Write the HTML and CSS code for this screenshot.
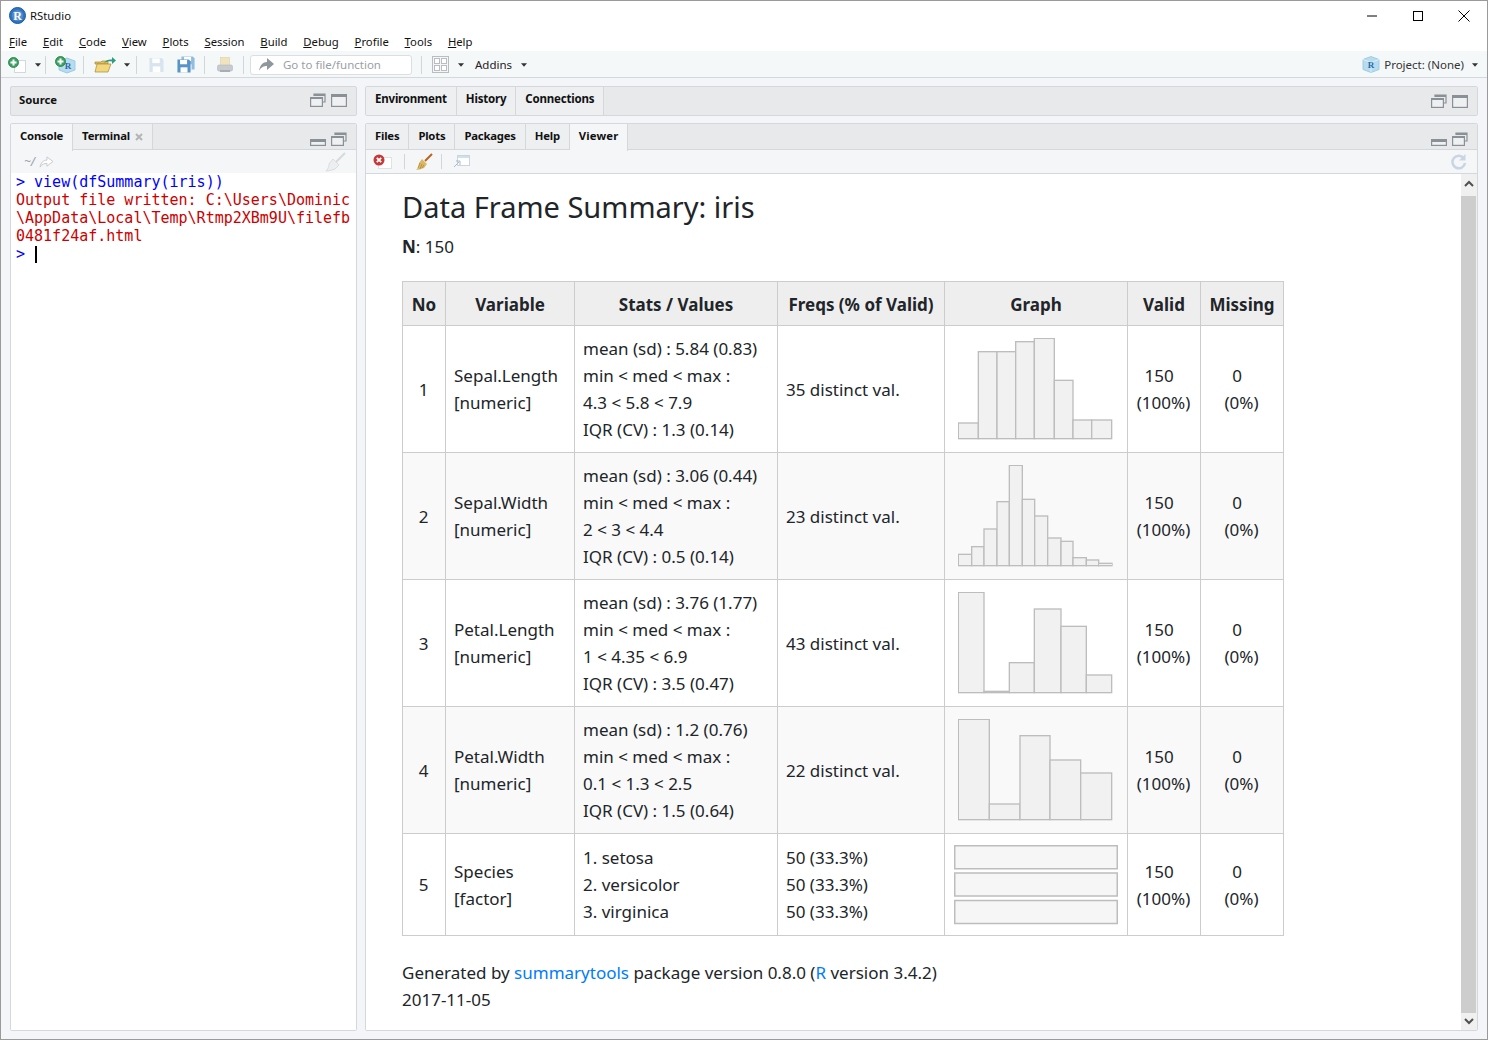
FILE: index.html
```html
<!DOCTYPE html>
<html lang="en">
<head>
<meta charset="utf-8">
<title>RStudio</title>
<link rel="stylesheet" href="styles.css">
</head>
<body>
<svg class="defs" width="0" height="0" aria-hidden="true">
  <symbol id="caret" viewBox="0 0 7 4"><path d="M0 0h7L3.500 4z" fill="#333"/></symbol>
  <symbol id="win-stack" viewBox="0 0 16 14"><path d="M4 3V1h11v8h-2" fill="none" stroke="#8a9196" stroke-width="1.200"/><rect x="4" y="1" width="11" height="2" fill="#8a9196"/><rect x=".6" y="4.600" width="11.800" height="8.800" fill="#eef0f2" stroke="#8a9196" stroke-width="1.200"/><rect x="1" y="4" width="11" height="2" fill="#8a9196"/></symbol>
  <symbol id="win-max" viewBox="0 0 16 14"><rect x=".6" y="1.600" width="14.800" height="11.800" fill="#eef0f2" stroke="#8a9196" stroke-width="1.200"/><rect x="1" y="1" width="14" height="3" fill="#8a9196"/></symbol>
  <symbol id="win-min" viewBox="0 0 16 8"><rect x=".6" y="1.600" width="14.800" height="5.800" fill="#eef0f2" stroke="#8a9196" stroke-width="1.200"/><rect x="1" y="1" width="14" height="3" fill="#8a9196"/></symbol>
  <symbol id="plus-doc" viewBox="0 0 19 16"><rect x="6.500" y="3.500" width="11" height="12" fill="#fff" stroke="#d5d8da"/><circle cx="5.500" cy="5.500" r="5" fill="#3ba361" stroke="#1d7a40" stroke-width=".8"/><path d="M5.500 2.500v6M2.500 5.500h6" stroke="#fff" stroke-width="2"/></symbol>
  <symbol id="disk" viewBox="0 0 16 16"><path d="M.5.500h13l2 2v13H.5z" fill="currentColor"/><rect x="3.500" y="1" width="8" height="5" fill="#fff"/><rect x="4" y="9.500" width="8" height="6" fill="#fff"/></symbol>
</svg>

<div class="app">
  <header class="titlebar">
    <div class="app-id">
      <svg class="logo" width="17" height="17" viewBox="0 0 17 17"><circle cx="8.500" cy="8.500" r="8" fill="#2f74c0" stroke="#1c5ba2"/><circle cx="8.500" cy="8.500" r="5.500" fill="#fff" opacity=".18"/><text x="8.500" y="12.500" class="logo-r">R</text></svg>
      <span>RStudio</span>
    </div>
    <div class="winctl">
      <svg width="16" height="16" viewBox="0 0 16 16"><path d="M3 8h10" stroke="#000"/></svg>
      <svg width="16" height="16" viewBox="0 0 16 16"><rect x="3.500" y="3.500" width="9" height="9" fill="none" stroke="#000"/></svg>
      <svg width="16" height="16" viewBox="0 0 16 16"><path d="M2.500 2.500l11 11M13.500 2.500l-11 11" stroke="#000"/></svg>
    </div>
  </header>

  <nav class="menubar">
    <span><u>F</u>ile</span><span><u>E</u>dit</span><span><u>C</u>ode</span><span><u>V</u>iew</span><span><u>P</u>lots</span><span><u>S</u>ession</span><span><u>B</u>uild</span><span><u>D</u>ebug</span><span><u>P</u>rofile</span><span><u>T</u>ools</span><span><u>H</u>elp</span>
  </nav>

  <div class="toolbar">
    <svg class="i-new" width="19" height="16"><use href="#plus-doc"/></svg>
    <svg class="caret c1" width="6" height="4"><use href="#caret"/></svg>
    <i class="sep s1"></i>
    <svg class="i-proj" width="21" height="18" viewBox="0 0 21 18"><path d="M12 2l8 3v9l-8 3-8-3V5z" fill="#b8dcef" stroke="#8fc4e0" stroke-width=".8"/><text x="13" y="13" class="cube-r">R</text><circle cx="5.500" cy="5.500" r="5" fill="#3ba361" stroke="#1d7a40" stroke-width=".8"/><path d="M5.500 2.500v6M2.500 5.500h6" stroke="#fff" stroke-width="2"/></svg>
    <i class="sep s2"></i>
    <svg class="i-open" width="22" height="16" viewBox="0 0 22 16"><path d="M1 5h6l1-1h6v3H1z" fill="#e0c060" stroke="#a68a30" stroke-width=".7"/><path d="M1 15L3 7h14l-3 8z" fill="#f3d77e" stroke="#a68a30" stroke-width=".7"/><path d="M10 6c2-3 5-4 8-3.500V0l4 3.500-4 3.500V4.500c-3-.5-5 0-8 1.500z" fill="#2b9c7c"/></svg>
    <svg class="caret c2" width="6" height="4"><use href="#caret"/></svg>
    <i class="sep s3"></i>
    <svg class="i-save" width="15" height="16"><use href="#disk"/></svg>
    <svg class="i-saveall" width="18" height="17" viewBox="0 0 18 17"><g color="#8fbde0"><use href="#disk" x="4" y="0" width="14" height="14"/></g><g color="#5a94c6"><use href="#disk" x="0" y="3" width="14" height="14"/></g></svg>
    <i class="sep s4"></i>
    <svg class="i-print" width="16" height="16" viewBox="0 0 16 16"><rect x="3.500" y=".5" width="9" height="8" fill="#f0e4bf" stroke="#ddd0a5" stroke-width=".6"/><rect x=".5" y="8" width="15" height="6" rx="1.500" fill="#c7cbcf" stroke="#b4b9bd" stroke-width=".6"/><rect x="3" y="13" width="10" height="2" fill="#a9aeb3"/></svg>
    <i class="sep s5"></i>
    <div class="gotobox">
      <svg width="15" height="13" viewBox="0 0 15 13"><path d="M0 13C1 7 4 4 8 4V0l7 6-7 6V8C5 8 2 9 0 13z" fill="#8f969c"/></svg>
      <span>Go to file/function</span>
    </div>
    <i class="sep s6"></i>
    <svg class="i-grid" width="17" height="17" viewBox="0 0 17 17"><rect x=".5" y=".5" width="16" height="16" fill="#f5f6f7" stroke="#b9bdc1"/><rect x="2.500" y="2.500" width="5" height="5" fill="#fff" stroke="#b9bdc1"/><rect x="9.500" y="2.500" width="5" height="5" fill="#fff" stroke="#b9bdc1"/><rect x="2.500" y="9.500" width="5" height="5" fill="#fff" stroke="#b9bdc1"/><rect x="9.500" y="9.500" width="5" height="5" fill="#fff" stroke="#b9bdc1"/></svg>
    <svg class="caret c3" width="6" height="4"><use href="#caret"/></svg>
    <span class="addins">Addins</span>
    <svg class="caret c4" width="6" height="4"><use href="#caret"/></svg>
    <div class="project">
      <svg width="18" height="17" viewBox="0 0 18 17"><path d="M9 .5l8 3v10l-8 3-8-3v-10z" fill="#b8dcef" stroke="#8fc4e0" stroke-width=".8"/><path d="M1 3.500l8 3 8-3M9 6.500v10" fill="none" stroke="#d8eef8"/><text x="9" y="12" class="cube-r">R</text></svg>
      <span>Project: (None)</span>
      <svg class="caret c5" width="6" height="4"><use href="#caret"/></svg>
    </div>
  </div>

  <main class="workspace">
    <section class="column">
      <div class="pane pane-min">
        <div class="source-head">
          <b>Source</b>
          <div class="pane-ctl"><svg width="16" height="14"><use href="#win-stack"/></svg><svg width="16" height="14"><use href="#win-max"/></svg></div>
        </div>
      </div>
      <div class="pane pane-fill">
        <div class="tabbar">
          <span class="tab active first">Console</span>
          <span class="tab">Terminal<svg class="x" width="8" height="8" viewBox="0 0 8 8"><path d="M1 1l6 6M7 1L1 7" stroke="#b5b5b5" stroke-width="2"/></svg></span>
          <div class="pane-ctl low"><svg width="16" height="8"><use href="#win-min"/></svg><svg width="16" height="14"><use href="#win-stack"/></svg></div>
        </div>
        <div class="subbar">
          <span class="path">~/</span>
          <svg class="light-arrow" width="15" height="12" viewBox="0 0 15 13"><path d="M.5 12C1.500 7 4 4.500 8 4.500V1l6.500 5-6.500 5V8C5 8 2.500 9 .5 12z" fill="#fff" stroke="#c3c8cc"/></svg>
          <svg class="broom-off" width="21" height="20" viewBox="0 0 21 20"><path d="M20 1l-9 9" stroke="#d5d9dc" stroke-width="1.800" fill="none"/><path d="M8 7l6 6-4 4c-3 1-6 2-9 2 2-2 3-4 3-7z" fill="#eceef0" stroke="#d5d9dc" stroke-width=".8"/></svg>
        </div>
        <div class="console">
          <div class="c-in">&gt; view(dfSummary(iris))</div>
          <div class="c-err">Output file written: C:\Users\Dominic<br>\AppData\Local\Temp\Rtmp2XBm9U\filefb<br>0481f24af.html</div>
          <div class="c-in">&gt; <span class="cursor"></span></div>
        </div>
      </div>
    </section>

    <section class="column">
      <div class="pane pane-min">
        <div class="tabbar tall">
          <span class="tab">Environment</span><span class="tab">History</span><span class="tab">Connections</span>
          <div class="pane-ctl"><svg width="16" height="14"><use href="#win-stack"/></svg><svg width="16" height="14"><use href="#win-max"/></svg></div>
        </div>
      </div>
      <div class="pane pane-fill">
        <div class="tabbar">
          <span class="tab">Files</span><span class="tab">Plots</span><span class="tab">Packages</span><span class="tab">Help</span><span class="tab active viewer-tab">Viewer</span>
          <div class="pane-ctl low"><svg width="16" height="8"><use href="#win-min"/></svg><svg width="16" height="14"><use href="#win-stack"/></svg></div>
        </div>
        <div class="subbar viewerbar">
          <svg class="i-stop" width="19" height="15" viewBox="0 0 19 15"><rect x="5.500" y="3.500" width="13" height="11" fill="#fff" stroke="#dfe2e4"/><circle cx="6" cy="6" r="5.500" fill="#c23b3b"/><path d="M3.800 3.800l4.400 4.400M8.200 3.800l-4.400 4.400" stroke="#fff" stroke-width="1.800"/></svg>
          <i class="sep v1"></i>
          <svg class="i-broom" width="18" height="18" viewBox="0 0 18 18"><path d="M17 1l-7 7" stroke="#b5651d" stroke-width="2"/><path d="M7 6l5 5-3 4c-3 1-6 2-8 2 2-2 3-4 3-7z" fill="#dcb865"/><path d="M5 10l-2 5M7 11l-2 5M9 12l-2 3" stroke="#a98a35" stroke-width=".8"/></svg>
          <i class="sep v2"></i>
          <svg class="i-popout" width="17" height="13" viewBox="0 0 17 13"><rect x="4.500" y=".5" width="12" height="10" fill="#fff" stroke="#c9d6e2"/><rect x="5" y="1" width="11" height="2" fill="#cfe0ef"/><path d="M1 12l5-5M3 6h4v4" stroke="#a9b9c7" fill="none"/></svg>
          <svg class="i-refresh" width="16" height="17" viewBox="0 0 16 17"><path d="M13 5.500A6.300 6.300 0 1 0 14 10" fill="none" stroke="#c9d5e3" stroke-width="2.500"/><path d="M8 7.500h6.500V1z" fill="#c9d5e3"/></svg>
        </div>
        <div class="viewer">
          <article class="doc">
            <h1>Data Frame Summary: iris</h1>
            <p class="n"><b>N</b>: 150</p>
            <table class="summary">
              <colgroup><col class="w-no"><col class="w-var"><col class="w-stats"><col class="w-freq"><col class="w-graph"><col class="w-valid"><col class="w-miss"></colgroup>
              <thead><tr><th>No</th><th>Variable</th><th>Stats / Values</th><th>Freqs (% of Valid)</th><th>Graph</th><th>Valid</th><th>Missing</th></tr></thead>
              <tbody>
                <tr>
                  <td class="ctr">1</td><td>Sepal.Length<br>[numeric]</td>
                  <td>mean (sd) : 5.84 (0.83)<br>min &lt; med &lt; max :<br>4.3 &lt; 5.8 &lt; 7.9<br>IQR (CV) : 1.3 (0.14)</td>
                  <td>35 distinct val.</td>
                  <td class="graph"><svg class="hist" width="155" height="102" viewBox="0 0 465 306">
                    <rect x="1" y="255" width="60" height="47"/><rect x="61" y="41" width="56" height="261"/><rect x="117" y="41" width="56" height="261"/><rect x="173" y="11" width="56" height="291"/><rect x="229" y="1" width="60" height="301"/><rect x="289" y="127" width="56" height="175"/><rect x="345" y="246" width="56" height="56"/><rect x="401" y="246" width="60" height="56"/>
                  </svg></td>
                  <td class="ctr">150&nbsp;&nbsp;<br>(100%)</td><td class="ctr">0&nbsp;&nbsp;<br>(0%)</td>
                </tr>
                <tr>
                  <td class="ctr">2</td><td>Sepal.Width<br>[numeric]</td>
                  <td>mean (sd) : 3.06 (0.44)<br>min &lt; med &lt; max :<br>2 &lt; 3 &lt; 4.4<br>IQR (CV) : 0.5 (0.14)</td>
                  <td>23 distinct val.</td>
                  <td class="graph"><svg class="hist" width="155" height="102" viewBox="0 0 465 306">
                    <rect x="1" y="268" width="40" height="34"/><rect x="41" y="245" width="37" height="57"/><rect x="78" y="192" width="39" height="110"/><rect x="117" y="110" width="37" height="192"/><rect x="154" y="1" width="39" height="301"/><rect x="193" y="103" width="37" height="199"/><rect x="230" y="153" width="39" height="149"/><rect x="269" y="219" width="40" height="83"/><rect x="309" y="229" width="36" height="73"/><rect x="345" y="278" width="40" height="24"/><rect x="385" y="285" width="37" height="17"/><rect x="422" y="295" width="40" height="7"/>
                  </svg></td>
                  <td class="ctr">150&nbsp;&nbsp;<br>(100%)</td><td class="ctr">0&nbsp;&nbsp;<br>(0%)</td>
                </tr>
                <tr>
                  <td class="ctr">3</td><td>Petal.Length<br>[numeric]</td>
                  <td>mean (sd) : 3.76 (1.77)<br>min &lt; med &lt; max :<br>1 &lt; 4.35 &lt; 6.9<br>IQR (CV) : 3.5 (0.47)</td>
                  <td>43 distinct val.</td>
                  <td class="graph"><svg class="hist" width="155" height="102" viewBox="0 0 465 306">
                    <rect x="1" y="1" width="77" height="301"/><rect x="78" y="298" width="76" height="4"/><rect x="154" y="212" width="75" height="90"/><rect x="229" y="51" width="80" height="251"/><rect x="309" y="103" width="76" height="199"/><rect x="385" y="249" width="76" height="53"/>
                  </svg></td>
                  <td class="ctr">150&nbsp;&nbsp;<br>(100%)</td><td class="ctr">0&nbsp;&nbsp;<br>(0%)</td>
                </tr>
                <tr>
                  <td class="ctr">4</td><td>Petal.Width<br>[numeric]</td>
                  <td>mean (sd) : 1.2 (0.76)<br>min &lt; med &lt; max :<br>0.1 &lt; 1.3 &lt; 2.5<br>IQR (CV) : 1.5 (0.64)</td>
                  <td>22 distinct val.</td>
                  <td class="graph"><svg class="hist" width="155" height="102" viewBox="0 0 465 306">
                    <rect x="1" y="1" width="93" height="301"/><rect x="94" y="255" width="92" height="47"/><rect x="186" y="50" width="90" height="252"/><rect x="276" y="123" width="92" height="179"/><rect x="368" y="162" width="93" height="140"/>
                  </svg></td>
                  <td class="ctr">150&nbsp;&nbsp;<br>(100%)</td><td class="ctr">0&nbsp;&nbsp;<br>(0%)</td>
                </tr>
                <tr class="last">
                  <td class="ctr">5</td><td>Species<br>[factor]</td>
                  <td>1. setosa<br>2. versicolor<br>3. virginica</td>
                  <td>50 (33.3%)<br>50 (33.3%)<br>50 (33.3%)</td>
                  <td class="graph"><svg class="bars" width="164" height="80" viewBox="0 0 164 80">
                    <rect x=".75" y=".75" width="162.500" height="23"/><rect x=".75" y="28" width="162.500" height="23"/><rect x=".75" y="55.500" width="162.500" height="23"/>
                  </svg></td>
                  <td class="ctr">150&nbsp;&nbsp;<br>(100%)</td><td class="ctr">0&nbsp;&nbsp;<br>(0%)</td>
                </tr>
              </tbody>
            </table>
            <p class="foot">Generated by <a href="#">summarytools</a> package version 0.8.0 (<a href="#">R</a> version 3.4.2)<br>2017-11-05</p>
          </article>
          <div class="scroll">
            <div class="arrow up"><svg width="10" height="7" viewBox="0 0 10 7"><path d="M1 6l4-4 4 4" fill="none" stroke="#505050" stroke-width="2"/></svg></div>
            <div class="thumb"></div>
            <div class="arrow down"><svg width="10" height="7" viewBox="0 0 10 7"><path d="M1 1l4 4 4-4" fill="none" stroke="#505050" stroke-width="2"/></svg></div>
          </div>
        </div>
      </div>
    </section>
  </main>
</div>
</body>
</html>
```

FILE: styles.css
```css
* { box-sizing: border-box; }
html, body { margin: 0; height: 100%; }
body { font-family: "Noto Sans", "Open Sans", sans-serif; color: #222; overflow: hidden; }
.defs { position: absolute; }
.cube-r { font: bold 9px "Liberation Serif", serif; fill: #2a6aa5; text-anchor: middle; }
.logo-r { font: bold 12px "Liberation Serif", serif; fill: #fff; text-anchor: middle; }

.app { width: 1488px; height: 1040px; border: 1px solid #9a9a9a; display: flex; flex-direction: column; background: #f4f5f8; }

.titlebar { height: 32px; background: #fff; display: flex; align-items: center; justify-content: space-between; padding: 0 15px 3px 8px; flex: none; }
.app-id { display: flex; align-items: center; gap: 4px; font-size: 11.300px; color: #111; }
.winctl { display: flex; gap: 30px; }

.menubar { height: 18px; background: #fff; display: flex; gap: 15.800px; padding-left: 8px; font-size: 11.300px; line-height: 18px; color: #111; flex: none; }

.toolbar { height: 27px; background: #f5f8f9; border-bottom: 1px solid #d5d8db; display: flex; align-items: center; padding: 1px 0 0 7px; flex: none; font-size: 11.500px; color: #222; }
.sep { width: 1px; height: 18px; background: #d3d6d9; flex: none; }
.caret { flex: none; }
.c1 { margin-left: 8px; }
.s1 { margin-left: 4px; }
.i-proj { margin-left: 9px; }
.s2 { margin-left: 7px; }
.i-open { margin-left: 10px; }
.c2 { margin-left: 8px; }
.s3 { margin-left: 6px; }
.i-save { margin-left: 12px; color: #d8e4ee; }
.i-saveall { margin-left: 13px; }
.s4 { margin-left: 9px; }
.i-print { margin-left: 12px; }
.s5 { margin-left: 10px; }
.gotobox { margin-left: 6px; width: 162px; height: 20px; background: #fff; border: 1px solid #dcdfe2; border-radius: 3px; display: flex; align-items: center; gap: 9px; padding-left: 8px; color: #9aa0a6; }
.s6 { margin-left: 9px; }
.i-grid { margin-left: 10px; }
.c3 { margin-left: 9px; }
.addins { margin-left: 11px; }
.c4 { margin-left: 9px; }
.project { margin-left: auto; display: flex; align-items: center; gap: 4px; padding-right: 9px; color: #333; }
.c5 { margin-left: 4px; }

.workspace { flex: 1; min-height: 0; display: grid; grid-template-columns: 347px 1113px; gap: 8px; padding: 8px 9px 8px 9px; }
.column { display: flex; flex-direction: column; gap: 7px; min-height: 0; }
.pane { border: 1px solid #d5d8db; border-radius: 2px; background: #fff; overflow: hidden; }
.pane-min { height: 30px; flex: none; background: #e7e9eb; }
.pane-fill { flex: 1; min-height: 0; display: flex; flex-direction: column; }

.source-head { height: 100%; display: flex; align-items: center; padding: 0 0 3px 8px; font-size: 11.300px; color: #111; }
.pane-ctl { margin-left: auto; display: flex; gap: 5px; align-items: center; padding-right: 9px; }
.source-head .pane-ctl { margin-top: 1px; }
.pane-ctl.low { align-items: flex-end; padding-bottom: 3px; height: 100%; }

.tabbar { height: 26px; background: #e7e9eb; display: flex; align-items: stretch; flex: none; border-bottom: 1px solid #d5d8db; }
.tabbar.tall { height: 100%; border-bottom: none; }
.tab { display: flex; align-items: center; padding: 0 9px 3px; font-size: 11.300px; font-weight: 700; color: #111; border-right: 1px solid #d5d8db; background: #edeff1; letter-spacing: -.2px; }
.tabbar.tall .tab { padding-bottom: 5px; font-size: 11.500px; }
.tab.active { background: #f4f6f8; height: 27px; padding-bottom: 4px; z-index: 1; }
.tab.viewer-tab { letter-spacing: .15px; }
.x { margin-left: 5px; margin-top: 3px; }

.subbar { height: 24px; background: #f4f6f8; border-bottom: 1px solid #d5d8db; display: flex; align-items: center; flex: none; }
.path { margin-left: 13px; color: #9aa0a6; font-size: 12px; font-style: italic; }
.light-arrow { margin-left: 4px; }
.broom-off { margin-left: auto; margin-right: 10px; }
.viewerbar .i-stop { margin-left: 7px; }
.v1 { margin-left: 12px; height: 15px; }
.i-broom { margin-left: 10px; }
.v2 { margin-left: 8px; height: 15px; }
.i-popout { margin-left: 11px; }
.i-refresh { margin-left: auto; margin-right: 10px; }

.console { flex: 1; padding: 0 5px; font: 15px/18px "DejaVu Sans Mono", monospace; background: #fff; margin-top: -1px; }
.c-in { color: #0000ff; height: 18px; white-space: nowrap; }
.c-err { color: #cc0000; white-space: nowrap; }
.cursor { display: inline-block; width: 2px; height: 17px; background: #000; vertical-align: -4px; margin-left: 1px; }

.viewer { flex: 1; min-height: 0; display: flex; background: #fff; }
.doc { flex: 1; padding: 0 0 0 36px; font-family: "Noto Sans", sans-serif; font-size: 17px; line-height: 27px; color: #212529; }
.doc h1 { font-size: 29px; font-weight: 400; line-height: 36px; margin: 15px 0 0; color: #212529; }
.n { margin: 8px 0 0; }
.n b { font-weight: 700; }
.summary { margin-top: 21px; border-collapse: collapse; table-layout: fixed; width: 881px; }
.w-no { width: 43px; } .w-var { width: 129px; } .w-stats { width: 203px; } .w-freq { width: 167px; } .w-graph { width: 183px; } .w-valid { width: 73px; } .w-miss { width: 83px; }
.summary th { height: 44px; border: 1px solid #ccc; background: #eee; font-weight: 700; text-align: center; padding: 2px 0 0; white-space: nowrap; }
.summary td { height: 127px; border: 1px solid #ccc; padding: 0 8px; vertical-align: middle; }
.summary tbody tr:nth-child(even) td { background: #f9f9f9; }
.summary .last td { height: 102px; }
.summary td.ctr { text-align: center; padding-right: 9px; }
td.graph { padding: 0; text-align: center; }
.summary td.graph { padding: 0; }
td.graph svg { display: block; margin: 0 auto; }
td.graph svg.hist { margin: 0 0 0 13px; }
.hist rect { fill: #f1f1f1; stroke: #bdbdbd; stroke-width: 4; }
.bars rect { fill: #f6f6f6; stroke: #bdbdbd; stroke-width: 1.500; }
.foot { margin: 23px 0 0; }
.foot a { color: #007bff; text-decoration: none; }

.scroll { width: 16px; flex: none; display: flex; flex-direction: column; background: #f0f0f0; }
.arrow { display: flex; align-items: center; justify-content: center; flex: none; }
.arrow.up { height: 22px; padding-bottom: 4px; }
.arrow.down { height: 17px; }
.thumb { flex: 1; background: #cdcdcd; margin-right: 1px; }
```
